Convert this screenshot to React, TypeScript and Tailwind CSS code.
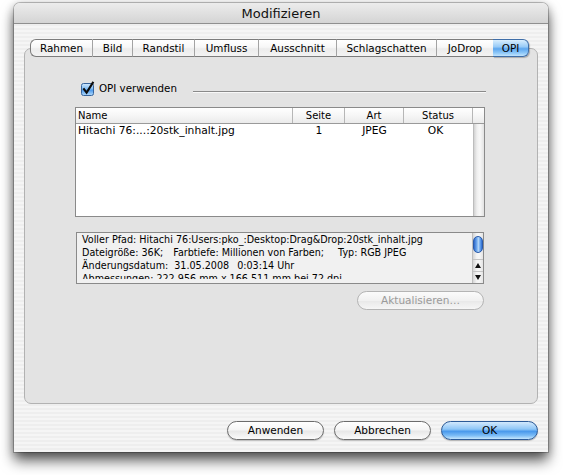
import React from "react";

const TABS: { label: string; w: string }[] = [
  { label: "Rahmen", w: "w-[63px]" },
  { label: "Bild", w: "w-[40px]" },
  { label: "Randstil", w: "w-[62px]" },
  { label: "Umfluss", w: "w-[64px]" },
  { label: "Ausschnitt", w: "w-[78px]" },
  { label: "Schlagschatten", w: "w-[100px]" },
  { label: "JoDrop", w: "w-[56px]" },
  { label: "OPI", w: "w-[36px]" },
];

function Tab({ label, w, i }: { label: string; w: string; i: number }) {
  if (i === TABS.length - 1) {
    return (
      <div
        className={`${w} h-full flex items-center justify-center rounded-r-[6px] border border-l-0 border-[#3f6ea8] bg-[linear-gradient(#d9eefe,#98cbf7_42%,#5da6ee_55%,#8cc7f8_80%,#c2e4fd)] shadow-[1px_1px_1px_rgba(0,0,0,0.25)]`}
      >
        <span className="text-[10.4px] leading-none">{label}</span>
      </div>
    );
  }
  return (
    <div
      className={`${w} h-full flex items-center justify-center border-y border-[#7c7c7c] bg-[linear-gradient(#ffffff,#f7f7f7_45%,#ececec_55%,#f3f3f3)] ${
        i === 0 ? "border-l rounded-l-[6px]" : ""
      } ${i < TABS.length - 2 ? "border-r border-r-[#a3a3a3]" : ""}`}
    >
      <span className="text-[10.4px] leading-none">{label}</span>
    </div>
  );
}

function Checkbox() {
  return (
    <svg width="14" height="14" viewBox="0 0 14 14" className="overflow-visible shrink-0">
      <defs>
        <linearGradient id="cbg" x1="0" y1="0" x2="0" y2="1">
          <stop offset="0" stopColor="#d4eafd" />
          <stop offset="0.45" stopColor="#7fbcf4" />
          <stop offset="0.55" stopColor="#4d9aec" />
          <stop offset="1" stopColor="#b4dcfc" />
        </linearGradient>
      </defs>
      <rect x="0.5" y="1.5" width="12" height="12" rx="2" fill="url(#cbg)" stroke="#36649c" />
      <path d="M3 7.2 L5.6 10.6 L11.8 0.8" fill="none" stroke="#0d0d0d" strokeWidth="2.1" strokeLinecap="square" />
    </svg>
  );
}

function AquaButton({
  label,
  w,
  kind,
}: {
  label: string;
  w: string;
  kind: "normal" | "primary" | "disabled";
}) {
  const style =
    kind === "primary"
      ? "border-[#2c5a97] bg-[linear-gradient(#d2e9fd,#8ec6f7_42%,#4a99ec_55%,#7dbdf6_80%,#c6e6fd)] text-black shadow-[0_1px_1px_rgba(0,0,0,0.25)]"
      : kind === "disabled"
      ? "border-[#b4b4b4] bg-[linear-gradient(#fbfbfb,#f1f1f1_50%,#e9e9e9_55%,#f6f6f6)] text-[#9a9a9a]"
      : "border-[#6c6c6c] bg-[linear-gradient(#ffffff,#f5f5f5_45%,#e8e8e8_55%,#fbfbfb)] text-black shadow-[0_1px_1px_rgba(0,0,0,0.2)]";
  return (
    <div className={`${w} h-[19px] rounded-full border flex items-center justify-center ${style}`}>
      <span className="text-[10.5px] leading-none">{label}</span>
    </div>
  );
}

export default function App() {
  return (
    <div className="w-[563px] h-[475px] bg-white pl-[14px] pt-[3px] font-['DejaVu_Sans',sans-serif] text-black overflow-hidden">
      <div className="w-[534px] h-[449px] rounded-t-[6px] flex flex-col overflow-hidden shadow-[0_0_0_1px_rgba(0,0,0,0.22),0_9px_14px_rgba(0,0,0,0.6),0_2px_10px_rgba(0,0,0,0.3)]">
        {/* title bar */}
        <div className="h-[21px] shrink-0 border-b border-[#8f8f8f] bg-[linear-gradient(#ececec,#dedede_60%,#d4d4d4)] flex items-center justify-center">
          <span className="text-[13px] leading-none text-[#111]">Modifizieren</span>
        </div>
        {/* body */}
        <div className="flex-1 flex flex-col bg-[repeating-linear-gradient(180deg,#eeeeee_0px,#eeeeee_2px,#f5f5f5_2px,#f5f5f5_4px)]">
          {/* tabs */}
          <div className="relative z-10 mt-[15px] ml-[16px] h-[18px] flex">
            {TABS.map((t, i) => (
              <Tab key={t.label} label={t.label} w={t.w} i={i} />
            ))}
          </div>
          {/* pane */}
          <div className="-mt-[9px] mx-[10px] h-[356px] rounded-[7px] border border-[#b2b2b2] bg-[#e3e3e3] flex flex-col">
            {/* checkbox row */}
            <div className="mt-[33px] pl-[56px] pr-[51px] h-[14px] flex items-start">
              <Checkbox />
              <span className="ml-[4px] text-[10.3px] leading-[13px]">OPI verwenden</span>
              <div className="ml-auto mt-[9px] w-[293px] h-[2px] border-t border-[#8a8a8a] border-b border-b-[#f8f8f8]" />
            </div>
            {/* table */}
            <div className="mt-[11px] ml-[50px] w-[410px] h-[110px] border border-[#8a8a8a] bg-white flex flex-col">
              <div className="h-[16px] shrink-0 flex border-b border-[#9a9a9a] bg-[linear-gradient(#ffffff,#f6f6f6_50%,#ebebeb)] text-[10px] leading-none">
                <div className="w-[217px] border-r border-[#b6b6b6] flex items-center pl-[2px]">Name</div>
                <div className="w-[52px] border-r border-[#b6b6b6] flex items-center justify-center">Seite</div>
                <div className="w-[59px] border-r border-[#b6b6b6] flex items-center justify-center">Art</div>
                <div className="w-[69px] border-r border-[#b6b6b6] flex items-center justify-center">Status</div>
                <div className="flex-1" />
              </div>
              <div className="flex-1 flex">
                <div className="flex-1">
                  <div className="h-[15px] flex items-center text-[10.7px] leading-none">
                    <div className="w-[217px] pl-[2px]">Hitachi 76:...:20stk_inhalt.jpg</div>
                    <div className="w-[52px] text-center">1</div>
                    <div className="w-[59px] text-center">JPEG</div>
                    <div className="w-[69px] text-center pr-[6px]">OK</div>
                  </div>
                </div>
                <div className="w-[11px] border-l border-[#bdbdbd] bg-[linear-gradient(90deg,#d2d2d2,#efefef_30%,#f8f8f8_60%,#e2e2e2)]" />
              </div>
            </div>
            {/* info box */}
            <div className="mt-[15px] ml-[51px] w-[408px] h-[52px] border border-[#8a8a8a] bg-[#f1f1f1] flex">
              <div className="flex-1">
                <div className="h-[46px] overflow-hidden pl-[5px] text-[9.6px] leading-[13px] whitespace-nowrap">
                  <div>Voller Pfad: Hitachi 76:Users:pko_:Desktop:Drag&amp;Drop:20stk_inhalt.jpg</div>
                  <div>
                    Dateigröße: 36K;<span className="ml-[10px]">Farbtiefe: Millionen von Farben;</span>
                    <span className="ml-[14px]">Typ: RGB JPEG</span>
                  </div>
                  <div>
                    Änderungsdatum:<span className="ml-[6px]">31.05.2008</span>
                    <span className="ml-[8px]">0:03:14 Uhr</span>
                  </div>
                  <div>Abmessungen: 222,956 mm x 166,511 mm bei 72 dpi</div>
                </div>
              </div>
              <div className="w-[11px] border-l border-[#bdbdbd] bg-[linear-gradient(90deg,#d6d6d6,#f2f2f2_35%,#f8f8f8_60%,#e4e4e4)] flex flex-col">
                <div className="flex-1 pt-[3px] flex justify-center">
                  <div className="w-[10px] h-[17px] rounded-full border border-[#2a5aa8] bg-[linear-gradient(90deg,#2d67c9,#6fa9ee_35%,#b4d6f8_55%,#5d9cea_80%,#2f6ad0)]" />
                </div>
                <div className="h-[12px] border-t border-[#c4c4c4] flex items-center justify-center">
                  <svg width="6" height="5" viewBox="0 0 6 5">
                    <polygon points="3,0 6,5 0,5" fill="#111" />
                  </svg>
                </div>
                <div className="h-[12px] border-t border-[#c4c4c4] flex items-center justify-center">
                  <svg width="6" height="5" viewBox="0 0 6 5">
                    <polygon points="0,0 6,0 3,5" fill="#111" />
                  </svg>
                </div>
              </div>
            </div>
            {/* Aktualisieren */}
            <div className="mt-[7px] ml-[332px]">
              <AquaButton label="Aktualisieren…" w="w-[127px]" kind="disabled" />
            </div>
          </div>
          {/* bottom buttons */}
          <div className="mt-[17px] pr-[10px] flex justify-end gap-[10px]">
            <AquaButton label="Anwenden" w="w-[97px]" kind="normal" />
            <AquaButton label="Abbrechen" w="w-[97px]" kind="normal" />
            <AquaButton label="OK" w="w-[97px]" kind="primary" />
          </div>
        </div>
      </div>
    </div>
  );
}
